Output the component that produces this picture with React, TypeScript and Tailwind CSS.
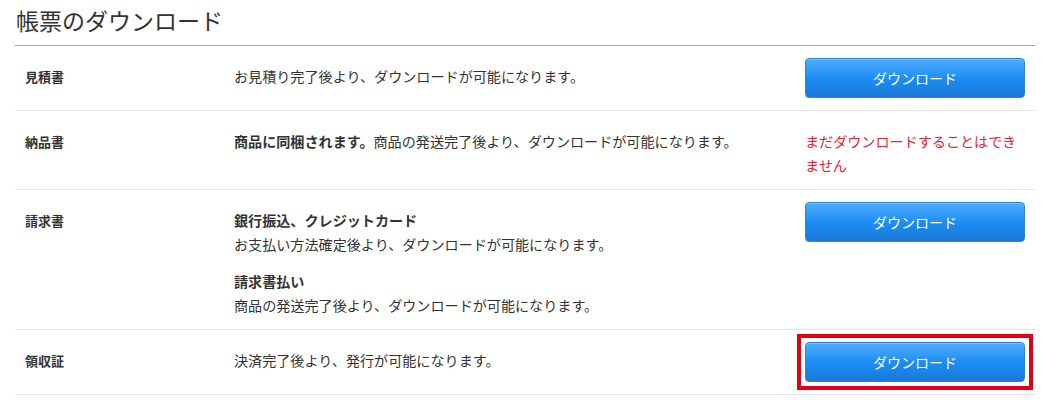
import React from 'react';

type Row = {
  label: string;
  body: React.ReactNode;
  action: 'download' | 'unavailable';
  highlighted?: boolean;
};

const font = 'font-["Noto_Sans_CJK_JP","Noto_Sans",sans-serif]';

const DownloadButton: React.FC = () => (
  <button
    type="button"
    className="h-[40px] w-[220px] rounded-[4px] border border-[#2f86d6] bg-gradient-to-b from-[#4eacfb] via-[#1c8ef5] to-[#1a78d6] text-[14px] text-white shadow-[inset_0_1px_0_rgba(255,255,255,0.25)]"
  >
    ダウンロード
  </button>
);

const rows: Row[] = [
  {
    label: '見積書',
    body: <p>お見積り完了後より、ダウンロードが可能になります。</p>,
    action: 'download',
  },
  {
    label: '納品書',
    body: (
      <p>
        <span className="font-bold">商品に同梱されます。</span>商品の発送完了後より、ダウンロードが可能になります。
      </p>
    ),
    action: 'unavailable',
  },
  {
    label: '請求書',
    body: (
      <div className="space-y-[14px]">
        <div>
          <p className="font-bold">銀行振込、クレジットカード</p>
          <p>お支払い方法確定後より、ダウンロードが可能になります。</p>
        </div>
        <div>
          <p className="font-bold">請求書払い</p>
          <p>商品の発送完了後より、ダウンロードが可能になります。</p>
        </div>
      </div>
    ),
    action: 'download',
  },
  {
    label: '領収証',
    body: <p>決済完了後より、発行が可能になります。</p>,
    action: 'download',
    highlighted: true,
  },
];

export default function App() {
  return (
    <div className={`${font} min-h-[412px] w-[1052px] bg-white pl-[15px] pr-[17px] text-[#333]`}>
      <h1 className="border-b border-[#a3a3a3] pb-[5px] pl-px text-[23px] leading-[40px] font-normal text-[#333]">
        帳票のダウンロード
      </h1>
      {rows.map((row) => (
        <div
          key={row.label}
          className="grid grid-cols-[209px_1fr_220px] border-b border-[#e3e3e3] px-[10px] py-[12px]"
        >
          <div className="pt-[7px] text-[13px] leading-[23.5px] font-bold">{row.label}</div>
          <div className="pt-[7px] text-[14.1px] leading-[23.5px]">{row.body}</div>
          <div>
            {row.action === 'download' ? (
              <div className="relative">
                {row.highlighted && (
                  <div className="pointer-events-none absolute -inset-[8px] border-[4px] border-[#e00016]" />
                )}
                <DownloadButton />
              </div>
            ) : (
              <p className="pt-[7px] text-[14.1px] leading-[23.5px] text-[#e3262e]">
                まだダウンロードすることはできません
              </p>
            )}
          </div>
        </div>
      ))}
    </div>
  );
}
